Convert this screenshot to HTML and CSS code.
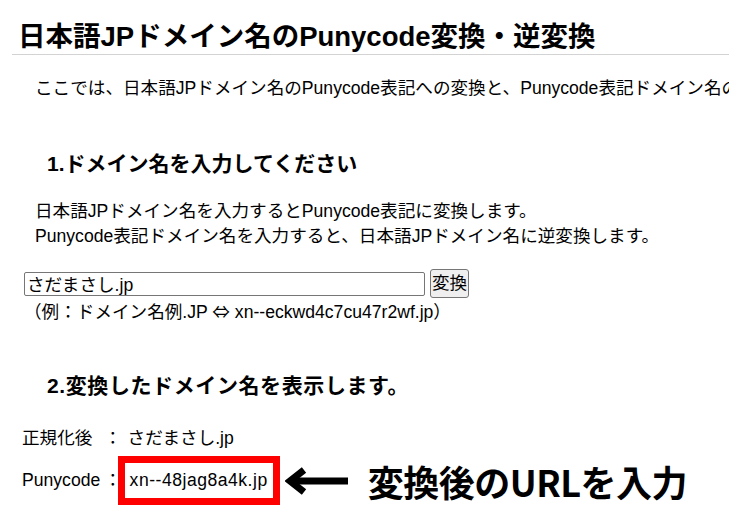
FILE: index.html
```html
<!DOCTYPE html>
<html lang="ja">
<head>
    <meta charset="UTF-8">
    <meta name="viewport" content="width=device-width, initial-scale=1.0">
    <title>日本語JPドメイン名のPunycode変換・逆変換</title>
    <link rel="stylesheet" href="styles.css">
</head>
<body>
    <h1 class="title">日本語JPドメイン名のPunycode変換・逆変換</h1>
    <p class="lead">ここでは、日本語JPドメイン名のPunycode表記への変換と、Punycode表記ドメイン名の日本語JPドメイン名への逆変換を行います。</p>

    <section class="step">
        <h2>1.ドメイン名を入力してください</h2>
        <p class="note">日本語JPドメイン名を入力するとPunycode表記に変換します。<br>Punycode表記ドメイン名を入力すると、日本語JPドメイン名に逆変換します。</p>
        <form class="convert" id="convertForm">
            <div class="field">
                <input type="text" id="domain" value="さだまさし.jp">
                <button type="submit">変換</button>
            </div>
            <p class="example">（例：ドメイン名例.JP <span class="sym">⇔</span> xn--eckwd4c7cu47r2wf.jp）</p>
        </form>
    </section>

    <section class="step">
        <h2>2.変換したドメイン名を表示します。</h2>
        <div class="row">
            <span class="label">正規化後</span>
            <span class="colon">：</span>
            <span class="value">さだまさし.jp</span>
        </div>
        <div class="row">
            <span class="label">Punycode</span>
            <span class="colon">：</span>
            <span class="value hl">xn--48jag8a4k.jp</span>
            <svg class="arrow" width="63" height="30" viewBox="0 0 63 30">
                <polyline points="19,4 5,15 19,26" fill="none" stroke="#000" stroke-width="7"/>
                <line x1="7" y1="15" x2="63" y2="15" stroke="#000" stroke-width="7"/>
            </svg>
            <span class="callout">変換後のURLを入力</span>
        </div>
    </section>
</body>
</html>
```

FILE: styles.css
```css
body {
    margin: 0;
    background: #fff;
    color: #000;
    font-family: "Liberation Sans", "Noto Sans CJK JP", sans-serif;
    font-size: 17.6px;
    overflow: hidden;
}
.title {
    margin: 19px 0 0 12px;
    padding: 0 0 0 6px;
    font-size: 27.5px;
    line-height: 35px;
    font-weight: 700;
    border-bottom: 1px solid #d3d3d3;
}
.lead {
    margin: 21px 0 0 35px;
    line-height: 25px;
    white-space: nowrap;
}
.step h2 {
    margin: 48px 0 0 47px;
    font-size: 21px;
    line-height: 30px;
    font-weight: 700;
}
.step + .step h2 {
    letter-spacing: 0.6px;
}
.note {
    margin: 20px 0 0 35px;
    line-height: 25px;
}
.convert {
    margin: 20px 0 0 24px;
}
.field {
    display: flex;
    align-items: center;
    gap: 5px;
}
input {
    box-sizing: border-box;
    width: 401px;
    height: 24px;
    padding: 1px 2px;
    border: 1px solid #767676;
    border-radius: 2px;
    font-family: inherit;
    font-size: 17.6px;
    line-height: 20px;
}
button {
    padding: 1px 1px;
    border: 1px solid #767676;
    border-radius: 3px;
    background-color: #efefef;
    font-family: inherit;
    font-size: 17.6px;
    line-height: 25px;
}
.example {
    margin: 2px 0 0;
    line-height: 22px;
}
.sym {
    font-family: "Noto Sans CJK JP", sans-serif;
}
.row {
    display: flex;
    align-items: center;
    margin-left: 22px;
    line-height: 25px;
}
.row:first-of-type {
    margin-top: 25px;
}
.row + .row {
    margin-top: 5px;
}
.label {
    width: 82px;
}
.colon {
    margin-right: 6px;
}
.hl {
    margin-left: -10px;
    padding: 5px 5px;
    border: 7px solid #ff0000;
    letter-spacing: 0.5px;
}
.arrow {
    margin-left: 5px;
}
.callout {
    margin-left: 20px;
    font-family: "Noto Sans CJK JP", sans-serif;
    font-size: 36px;
    font-weight: 700;
    line-height: 40px;
    letter-spacing: -0.5px;
}
```
